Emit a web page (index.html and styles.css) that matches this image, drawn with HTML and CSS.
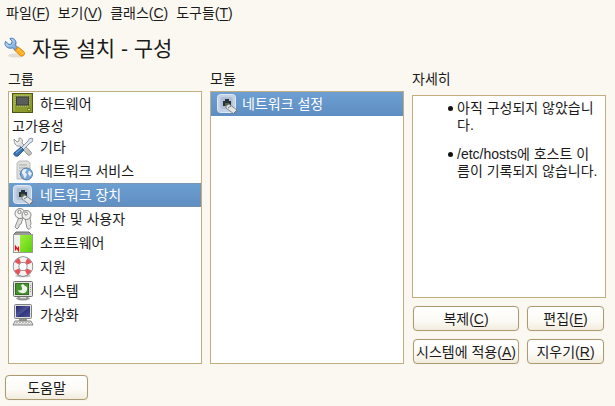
FILE: index.html
```html
<!DOCTYPE html>
<html lang="ko">
<head>
<meta charset="utf-8">
<title>자동 설치 - 구성</title>
<link rel="stylesheet" href="styles.css">
</head>
<body>
<svg class="defs" aria-hidden="true">
  <defs>
    <linearGradient id="steel" x1="0" y1="0" x2="1" y2="1"><stop offset="0" stop-color="#fafafa"/><stop offset="1" stop-color="#b8bab6"/></linearGradient>
    <linearGradient id="blue" x1="0" y1="0" x2="1" y2="1"><stop offset="0" stop-color="#dcecfb"/><stop offset="1" stop-color="#5c92cf"/></linearGradient>
    <linearGradient id="navy" x1="0" y1="0" x2="1" y2="1"><stop offset="0" stop-color="#22256a"/><stop offset=".5" stop-color="#4f5597"/><stop offset=".55" stop-color="#303579"/><stop offset="1" stop-color="#4a5196"/></linearGradient>
    <linearGradient id="lime" x1="0" y1="0" x2="1" y2="1"><stop offset="0" stop-color="#9df03a"/><stop offset="1" stop-color="#5bd00c"/></linearGradient>
    <symbol id="socket" viewBox="0 0 24 24">
      <rect x="2.500" y="2.500" width="18" height="18" rx="3" fill="#c3d3e5" stroke="#e0e8f1"/>
      <rect x="5.500" y="5" width="12" height="12" rx="2" fill="#aebfd2"/>
      <path d="M8 14V9h2V7h4v2h2v5z" fill="#26333f"/>
      <path d="M11 11v3M13 11v3" stroke="#8b9b3c"/>
      <path d="M11 14l3-2 8 6-3 4-8-6z" fill="#e4e5e2" stroke="#68727c" stroke-width=".8"/>
      <path d="M13 16l3-2M19 21l3-3" stroke="#6b7782" fill="none"/>
    </symbol>
  </defs>
</svg>

<nav class="menubar" aria-label="메뉴">
  <button type="button">파일(<u>F</u>)</button>
  <button type="button">보기(<u>V</u>)</button>
  <button type="button">클래스(<u>C</u>)</button>
  <button type="button">도구들(<u>T</u>)</button>
</nav>

<header class="heading">
  <svg class="wrench" viewBox="0 0 22 22" aria-hidden="true">
    <ellipse cx="12" cy="18.500" rx="8" ry="2" fill="#e2ded5"/>
    <path d="M6 1.500c3-1 6 1 6 4.500l-.4 2.200 2.600 2.600-2.700 2.900-3-2.800C5 12 1 10 1 6.400l.5-2L5 7.500l2.400-.6.700-2.400z" fill="url(#blue)" stroke="#4478b6"/>
    <path d="M11 13.500l3.200-3.600 5.700 4.800c1.800 2.200-.8 5.500-3.500 4z" fill="#ffad1c" stroke="#e28408"/>
    <path d="M13.500 14l1.500-1.500M15.500 15.700l1.500-1.500M17.500 17.300l1.500-1.500" stroke="#ffe08a"/>
  </svg>
  <h1>자동 설치 - 구성</h1>
</header>

<main class="columns">
  <section class="column">
    <h2 id="groups">그룹</h2>
    <ul class="panel list" role="listbox" aria-labelledby="groups">
      <li role="option">
        <svg class="icon" viewBox="0 0 24 24" aria-hidden="true">
          <rect x="1.500" y="1.500" width="20" height="19" fill="#8c9b2a" stroke="#4c5513"/>
          <path d="M3 19V3h17" fill="none" stroke="#b6c255"/>
          <path d="M6.500 3v12M8.500 3v12M10.500 3v12M12.500 3v12M14.500 3v12M16.500 3v12M4 5.500h15M4 7.500h15M4 9.500h15M4 11.500h15" stroke="#b3b69a" stroke-width=".8"/>
          <rect x="5.500" y="5" width="12" height="8" fill="#5a5d5a" stroke="#3b3e3b"/>
          <circle cx="18" cy="17.500" r="1.500" fill="#d8dba9" stroke="#5d6714"/>
        </svg>하드웨어</li>
      <li role="option" class="plain">고가용성</li>
      <li role="option">
        <svg class="icon" viewBox="0 0 24 24" aria-hidden="true">
          <path d="M3 4l3 3 2-1V3c3 0 4 2 3 5l9 9c1.500 2-1 4-3 3l-8-9C6 12 3 10 3 4z" fill="url(#steel)" stroke="#8b8e8a" stroke-width=".9"/>
          <path d="M11 12l6-6 1-2 3-1 1 1-1 3-2 1-6 6" fill="#dce5ef" stroke="#7a8796" stroke-width=".8"/>
          <path d="M10 12l3 3-6 6c-2 1-5-1-4-3z" fill="#3c72b4" stroke="#24528a" stroke-width=".9"/>
          <path d="M5 18l6-5" stroke="#8db7e5"/>
        </svg>기타</li>
      <li role="option">
        <svg class="icon" viewBox="0 0 24 24" aria-hidden="true">
          <path d="M6 4l2-2h9l2 2v16H6z" fill="#dfe0de" stroke="#b3b5b2" stroke-width=".9"/>
          <path d="M8 6h8M8 9h8M8 12h4M8 15h3" stroke="#a9aba8"/>
          <circle cx="15.500" cy="15" r="6" fill="#7ba7d7" stroke="#4a77ac" stroke-width=".9"/>
          <path d="M11 12.500c1-3 4-3 5-2l-2 3 2 2-2 4c-2-2-1-4-3-5zM18 11.500l3 3-2 3-2-3z" fill="#e9f1f7"/>
        </svg>네트워크 서비스</li>
      <li role="option" aria-selected="true" class="selected focused">
        <svg class="icon" aria-hidden="true"><use href="#socket"/></svg>네트워크 장치</li>
      <li role="option">
        <svg class="icon" viewBox="0 0 24 24" aria-hidden="true">
          <path d="M8 10l-4 10 2 2 2-2v-2l2-1 2-6z" fill="#e0e1df" stroke="#858784" stroke-width=".9"/>
          <circle cx="9" cy="6.500" r="5" fill="#f2f2f1" stroke="#858784"/>
          <circle cx="8.500" cy="5" r="1.700" fill="#fff" stroke="#858784"/>
          <path d="M14 11l2 10 2 1.500 2-2-1-2 1-1.500-1-7z" fill="#e5e6e4" stroke="#858784" stroke-width=".9"/>
          <circle cx="15.500" cy="8" r="4.500" fill="#eeefed" stroke="#858784"/>
          <circle cx="15" cy="6.500" r="1.500" fill="#fff" stroke="#858784"/>
        </svg>보안 및 사용자</li>
      <li role="option">
        <svg class="icon" viewBox="0 0 24 24" aria-hidden="true">
          <path d="M2 4l3-3h13l3 3z" fill="#999b98" stroke="#6c6e6b"/>
          <rect x="2.500" y="3.500" width="19" height="18" fill="#f0f1ef" stroke="#9a9c98"/>
          <rect x="9" y="4" width="12" height="17" fill="url(#lime)"/>
          <path d="M4.500 19.500v-4l3 4v-4" fill="none" stroke="#e01018" stroke-width="1.300"/>
        </svg>소프트웨어</li>
      <li role="option">
        <svg class="icon" viewBox="0 0 24 24" aria-hidden="true">
          <ellipse cx="12" cy="21" rx="8" ry="1.500" fill="#c9c9c9"/>
          <circle cx="12" cy="11.500" r="7" fill="none" stroke="#7d7d7d" stroke-width="6.500"/>
          <circle cx="12" cy="11.500" r="7" fill="none" stroke="#f3f3f2" stroke-width="5"/>
          <circle cx="12" cy="11.500" r="7" fill="none" stroke="#e8525a" stroke-width="5" stroke-dasharray="4.500 6.500" stroke-dashoffset="-3.250"/>
        </svg>지원</li>
      <li role="option">
        <svg class="icon" viewBox="0 0 24 24" aria-hidden="true">
          <ellipse cx="12" cy="19.500" rx="7" ry="2" fill="#aaa"/>
          <path d="M8 17h8v3H8z" fill="#dedfdd" stroke="#777"/>
          <rect x="2.500" y="2.500" width="19" height="15" rx="1" fill="#e3e4e1" stroke="#6b6d69"/>
          <rect x="4.500" y="4.500" width="13" height="11" fill="#489231" stroke="#326d20"/>
          <path d="M7 11c2 1 5 0 4-2l-1-3 2-1 2 2 2 1c1 4-2 7-5 6-2 0-4-1-4-3z" fill="#eef5eb"/>
          <path d="M19.500 6v8" stroke="#999" stroke-dasharray="1 1"/>
        </svg>시스템</li>
      <li role="option">
        <svg class="icon" viewBox="0 0 24 24" aria-hidden="true">
          <rect x="3.500" y="1.500" width="17" height="14" rx="1" fill="#dedfdc" stroke="#80827e"/>
          <rect x="5" y="3" width="14" height="11" fill="url(#navy)"/>
          <path d="M8 16h8v2H8z" fill="#92948f"/>
          <path d="M4 18h16l2 4H2z" fill="#ededeb" stroke="#777975" stroke-width=".9"/>
          <path d="M5 19.500h14M4 21h16" stroke="#a5a7a2" stroke-width=".8" stroke-dasharray="2 1"/>
        </svg>가상화</li>
    </ul>
  </section>

  <section class="column">
    <h2 id="modules">모듈</h2>
    <ul class="panel list" role="listbox" aria-labelledby="modules">
      <li role="option" aria-selected="true" class="selected module">
        <svg class="icon" aria-hidden="true"><use href="#socket"/></svg>네트워크 설정</li>
    </ul>
  </section>

  <section class="column">
    <h2>자세히</h2>
    <div class="panel details">
      <ul>
        <li>아직 구성되지 않았습니다.</li>
        <li>/etc/hosts에 호스트 이름이 기록되지 않습니다.</li>
      </ul>
    </div>
    <div class="actions">
      <button type="button">복제(<u>C</u>)</button>
      <button type="button">편집(<u>E</u>)</button>
      <button type="button">시스템에 적용(<u>A</u>)</button>
      <button type="button">지우기(<u>R</u>)</button>
    </div>
  </section>
</main>

<footer class="footer">
  <button type="button">도움말</button>
</footer>
</body>
</html>
```
FILE: styles.css
```css
* {
  box-sizing: border-box;
}

body {
  display: flex;
  flex-direction: column;
  min-height: 100vh;
  margin: 0;
  background: #fbf8f1;
  color: #1a1a1a;
  font: 14px/18px "Liberation Sans", "Noto Sans CJK KR", sans-serif;
}

.defs {
  position: absolute;
  width: 0;
  height: 0;
}

button {
  font: inherit;
  color: inherit;
  white-space: nowrap;
}

u {
  text-underline-offset: 2px;
}

h1,
h2,
ul {
  margin: 0;
  padding: 0;
  font-weight: 400;
}

.menubar {
  display: flex;
  gap: 8px;
  padding: 4px 6px;
}

.menubar button {
  padding: 0;
  border: 0;
  background: none;
}

.heading {
  display: flex;
  align-items: center;
  gap: 6px;
  height: 44px;
  padding: 0 4px;
}

.wrench {
  width: 22px;
  height: 22px;
}

h1 {
  padding-top: 2px;
  font-size: 21px;
  line-height: 28px;
}

h2 {
  padding-bottom: 3px;
  font-size: 14px;
  line-height: 18px;
}

.columns {
  flex: 1;
  display: grid;
  grid-template-columns: repeat(3, minmax(0, 1fr));
  gap: 8px;
  padding: 0 9px 0 8px;
}

.column {
  display: flex;
  flex-direction: column;
}

.panel {
  flex: 1;
  border: 1px solid #c2ad7e;
  background: #fff;
}

.list {
  list-style: none;
}

.list li {
  display: flex;
  align-items: center;
  gap: 5px;
  height: 24px;
  padding: 0 2px;
}

.list .plain {
  height: 19px;
  padding: 0 3px;
}

.list .selected {
  position: relative;
  background: linear-gradient(#6d9fd3, #5e8dc1);
  color: #fff;
}

.list .focused::after {
  content: "";
  position: absolute;
  inset: 0 0 0 28px;
  border: 1px dotted #8a8f9b;
}

.list .module {
  padding: 0 4px;
  gap: 3px;
}

.icon {
  flex: none;
  width: 24px;
  height: 24px;
}

.details {
  margin-top: 4px;
  padding: 4px 4px 4px 44px;
}

.details ul {
  display: grid;
  gap: 12px;
  list-style: none;
}

.details li {
  display: flex;
  gap: 4px;
  line-height: 17px;
  word-break: break-all;
}

.details li::before {
  content: "";
  flex: none;
  width: 5px;
  height: 5px;
  margin-top: 6px;
  margin-left: -9px;
  border-radius: 50%;
  background: #111;
}

.actions {
  display: grid;
  grid-template-columns: 106fr 77fr;
  gap: 8px;
  padding: 8px 2px 0 1px;
}

.actions button,
.footer button {
  height: 25px;
  padding: 1px 0 0;
  border: 1px solid #ab9b73;
  border-radius: 4px;
  background: linear-gradient(#fff, #fcfaf5 60%, #f2ecdd);
  box-shadow: 0 0 1px #d9d0b8;
}

.footer {
  padding: 11px 5px 6px;
}

.footer button {
  min-width: 83px;
}
```
